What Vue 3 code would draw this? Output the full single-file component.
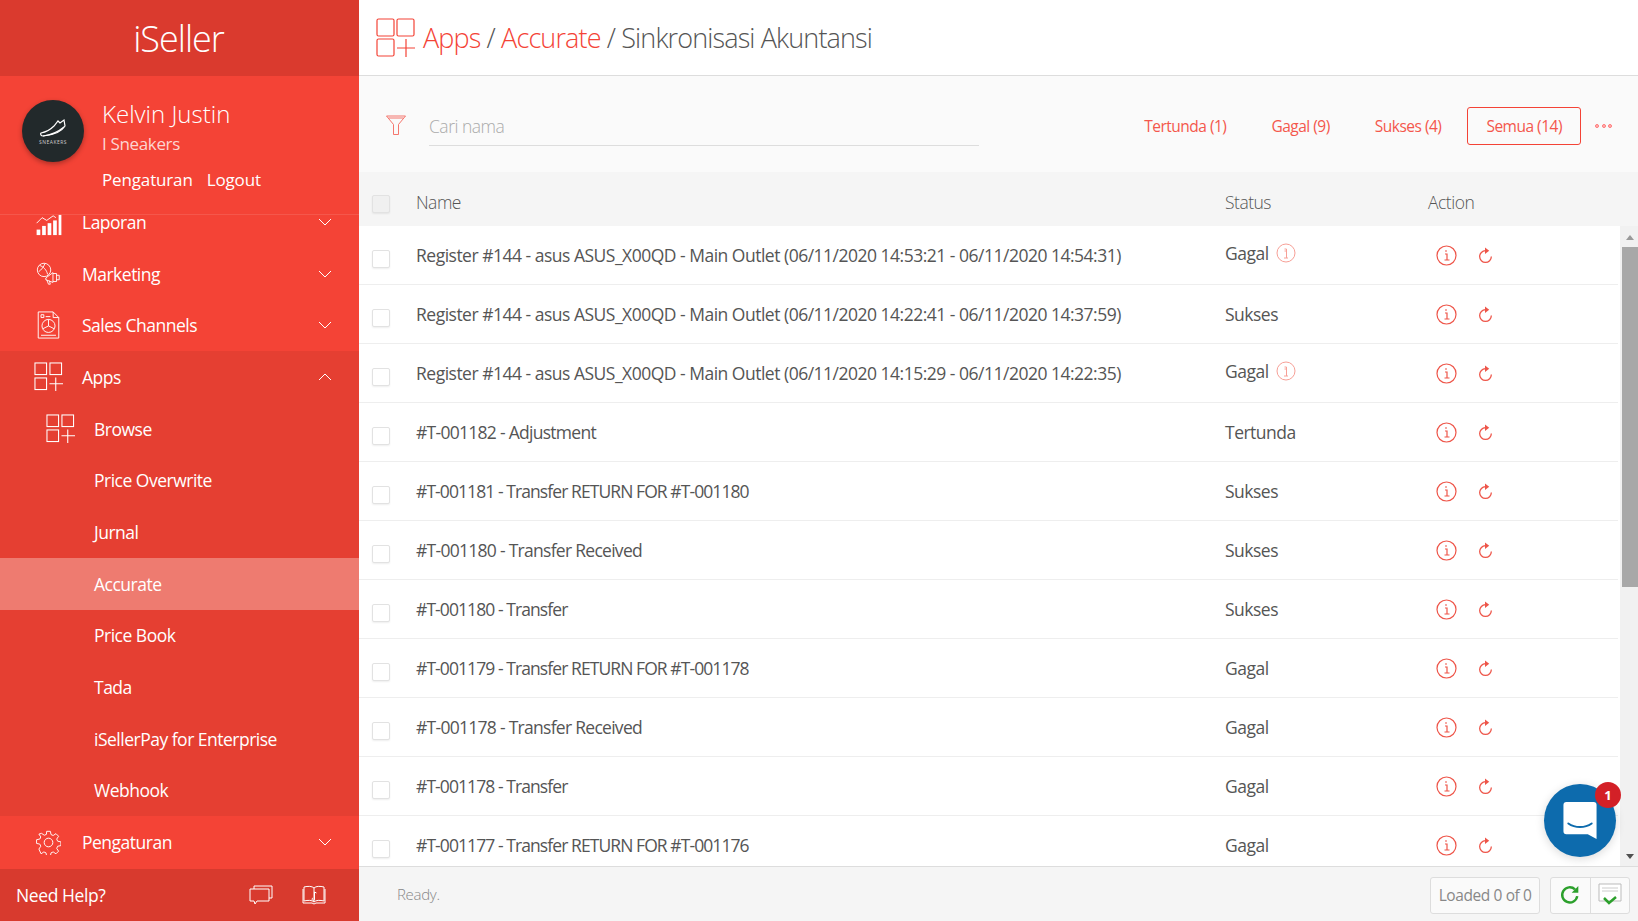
<script setup>
const menuTop = [
  { label: 'Laporan', icon: 'chart' },
  { label: 'Marketing', icon: 'mkt' },
  { label: 'Sales Channels', icon: 'sales' }
]
const subs = ['Price Overwrite', 'Jurnal', 'Accurate', 'Price Book', 'Tada', 'iSellerPay for Enterprise', 'Webhook']
const tabs = ['Tertunda (1)', 'Gagal (9)', 'Sukses (4)']
const rows = [
  { name: 'Register #144 - asus ASUS_X00QD - Main Outlet (06/11/2020 14:53:21 - 06/11/2020 14:54:31)', status: 'Gagal', info: true },
  { name: 'Register #144 - asus ASUS_X00QD - Main Outlet (06/11/2020 14:22:41 - 06/11/2020 14:37:59)', status: 'Sukses' },
  { name: 'Register #144 - asus ASUS_X00QD - Main Outlet (06/11/2020 14:15:29 - 06/11/2020 14:22:35)', status: 'Gagal', info: true },
  { name: '#T-001182 - Adjustment', status: 'Tertunda', fit: 'mid' },
  { name: '#T-001181 - Transfer RETURN FOR #T-001180', status: 'Sukses', fit: 'tight' },
  { name: '#T-001180 - Transfer Received', status: 'Sukses', fit: 'mid' },
  { name: '#T-001180 - Transfer', status: 'Sukses', fit: 'tight' },
  { name: '#T-001179 - Transfer RETURN FOR #T-001178', status: 'Gagal', fit: 'tight' },
  { name: '#T-001178 - Transfer Received', status: 'Gagal', fit: 'mid' },
  { name: '#T-001178 - Transfer', status: 'Gagal', fit: 'tight' },
  { name: '#T-001177 - Transfer RETURN FOR #T-001176', status: 'Gagal', fit: 'tight' }
]
</script>

<template>
  <div class="app">
    <aside class="side">
      <div class="brand">iSeller</div>
      <div class="profile">
        <div class="avatar">
          <svg width="28" height="19" viewBox="0 0 28 19" fill="none" stroke="#fff" stroke-width="1.2">
            <path d="M2 15c5-1 9-3 13-7l4-5 2 2 4-3 1 6c-3 5-10 9-22 10-2 0-3-2-2-3z" />
            <path d="M4 18c8-1 15-4 21-9" />
          </svg>
          <span class="avatar-text">SNEAKERS</span>
        </div>
        <div class="who">
          <div class="who-name">Kelvin Justin</div>
          <div class="who-store">I Sneakers</div>
          <div class="who-links"><span>Pengaturan</span><span>Logout</span></div>
        </div>
      </div>
      <nav class="menu">
        <div class="menu-inner">
          <div v-for="m in menuTop" :key="m.label" class="item">
            <span class="ico">
              <svg v-if="m.icon === 'chart'" class="i-chart" width="28" height="22" viewBox="0 0 29 24" fill="#fff" stroke="none">
                <rect x="1" y="17" width="4" height="6" /><rect x="7" y="13" width="4" height="10" /><rect x="13" y="10" width="4" height="13" /><rect x="19" y="7" width="4" height="16" /><rect x="25" y="1" width="3" height="22" />
                <path d="M1 10l6-6 5 3 7-5 3 2" fill="none" stroke="#fff" stroke-width="1" />
              </svg>
              <svg v-else-if="m.icon === 'mkt'" class="i-small" width="25" height="25" viewBox="0 0 28 26" fill="none" stroke="#fff" stroke-width="1">
                <circle cx="9" cy="9" r="7.5" />
                <path d="M4 4c4 1 8 5 9 10M3 11c3-2 6-6 7-9" />
                <path d="M11 18l8-6v11l-8-3zM19 13h4v9h-4M23 15h3v5h-3M12 20l2 5h2l-1-4" />
              </svg>
              <svg v-else class="i-small" width="25" height="28" viewBox="0 0 26 30" fill="none" stroke="#fff" stroke-width="1">
                <path d="M2 1h16l6 6v22H2z" /><path d="M18 1v6h6M5 4h3v3H5zM10 6h5" />
                <circle cx="13" cy="16" r="7" /><path d="M13 9v7l6 3M13 16l-6 3" />
                <path d="M5 26h16" />
              </svg>
            </span>
            <span class="label">{{ m.label }}</span>
            <svg class="chev" width="14" height="8" viewBox="0 0 14 8" fill="none" stroke="#fff" stroke-width="1"><path d="M1 1l6 6 6-6" /></svg>
          </div>
          <div class="group">
            <div class="item">
              <span class="ico">
                <svg width="29" height="29" viewBox="0 0 30 30" fill="none" stroke="#fff" stroke-width="1.1"><rect x="1" y="1" width="12" height="12" /><rect x="16.500" y="1" width="12" height="12" /><rect x="1" y="16.500" width="12" height="12" /><path d="M16 22.500h14M22.500 16v14" /></svg>
              </span>
              <span class="label">Apps</span>
              <svg class="chev" width="14" height="8" viewBox="0 0 14 8" fill="none" stroke="#fff" stroke-width="1"><path d="M1 7l6-6 6 6" /></svg>
            </div>
            <div class="sub">
              <span class="sub-ico">
                <svg width="29" height="29" viewBox="0 0 30 30" fill="none" stroke="#fff" stroke-width="1.1"><rect x="1" y="1" width="12" height="12" /><rect x="16.500" y="1" width="12" height="12" /><rect x="1" y="16.500" width="12" height="12" /><path d="M16 22.500h14M22.500 16v14" /></svg>
              </span>
              <span class="label">Browse</span>
            </div>
            <div v-for="s in subs" :key="s" class="sub" :class="{ active: s === 'Accurate' }">
              <span class="label">{{ s }}</span>
            </div>
          </div>
          <div class="item">
            <span class="ico">
              <svg class="i-small" width="25" height="25" viewBox="0 0 26 26" fill="none" stroke="#fff" stroke-width="1"><circle cx="13" cy="13" r="4.500" /><path d="M11 1h4l.7 3.500 2.300 1 3-2 2.800 2.800-2 3 1 2.300 3.500.7v4l-3.500.7-1 2.300 2 3-2.800 2.800-3-2-2.300 1-.7 3.500h-4l-.7-3.500-2.300-1-3 2L2.700 20l2-3-1-2.300-3.500-.7v-4l3.500-.7 1-2.300-2-3L5.500 3.200l3 2 2.300-1z" transform="translate(.4 .4) scale(.97)" /></svg>
            </span>
            <span class="label">Pengaturan</span>
            <svg class="chev" width="14" height="8" viewBox="0 0 14 8" fill="none" stroke="#fff" stroke-width="1"><path d="M1 1l6 6 6-6" /></svg>
          </div>
        </div>
      </nav>
      <div class="help">
        <span class="help-text">Need Help?</span>
        <svg class="help-chat" width="24" height="21" viewBox="0 0 24 21" fill="none" stroke="#fff" stroke-width="1"><path d="M5 4V1h18v12h-3" /><path d="M1 4h19v12H8l-2 3-1-3H1z" /></svg>
        <svg class="help-book" width="24" height="20" viewBox="0 0 24 20" fill="none" stroke="#fff" stroke-width="1"><path d="M12 3C10 1 6 1 2 2v14c4-1 8-1 10 1 2-2 6-2 10-1V2c-4-1-8-1-10 1zM12 3v14M1 4v14h9l2 1 2-1h9V4" /><path d="M11 13a1.200 1.200 0 1 0 1.500 1V7l2 1" /></svg>
      </div>
    </aside>

    <main class="main">
      <header class="crumbs">
        <svg width="40" height="40" viewBox="0 0 40 40" fill="none" stroke="#f44336" stroke-width="1.200"><rect x="1" y="1" width="17" height="17" rx="1.500" /><rect x="21" y="1" width="17" height="17" rx="1.500" /><rect x="1" y="21" width="17" height="17" rx="1.500" /><path d="M21 30h18M30 21v18" /></svg>
        <span class="crumb-text"><span class="red">Apps</span> / <span class="red">Accurate</span> / Sinkronisasi Akuntansi</span>
      </header>

      <section class="filter">
        <svg class="funnel" width="20" height="20" viewBox="0 0 20 20" fill="none" stroke="#f4685d" stroke-width=".9"><path d="M.5 1h19L12.500 9.500V19.500h-5V9.500zM2.500 3h15" /></svg>
        <div class="search">Cari nama</div>
        <div class="tabs">
          <span v-for="t in tabs" :key="t" class="tab">{{ t }}</span>
          <span class="tab on">Semua (14)</span>
          <span class="dots"><i></i><i></i><i></i></span>
        </div>
      </section>

      <div class="thead">
        <span class="check"></span>
        <span class="c-name">Name</span>
        <span class="c-status">Status</span>
        <span class="c-action">Action</span>
      </div>

      <div class="body">
        <div class="rows">
          <div v-for="(r, i) in rows" :key="i" class="row">
            <span class="check low"></span>
            <span class="c-name" :class="r.fit">{{ r.name }}</span>
            <span class="c-status" :class="{ raised: r.info }">{{ r.status }}
              <svg v-if="r.info" class="sinfo" width="20" height="20" viewBox="0 0 20 20" fill="none" stroke="#f7a097"><circle cx="10" cy="10" r="9" /><path d="M8.500 6h2v9M8 15h4M8.500 8h2" /></svg>
            </span>
            <span class="c-action">
              <svg width="21" height="21" viewBox="0 0 21 21" fill="none" stroke="#ee5549" stroke-width="1.200"><circle cx="10.500" cy="10.500" r="9.500" /><path d="M9 6h2M9 9h2v6M8.500 15h5" /></svg>
              <svg class="redo" width="15" height="17" viewBox="0 0 14 16" fill="none" stroke="#ee5549" stroke-width="1.200"><path d="M7 3.500A5.500 5.500 0 1 0 12.500 9" /><path d="M6.500.5l4 3-4 3z" fill="#ee5549" stroke="none" /></svg>
            </span>
          </div>
        </div>
        <div class="scrollbar">
          <span class="arrow up"></span>
          <span class="thumb"></span>
          <span class="spacer"></span>
          <span class="arrow down"></span>
        </div>
      </div>

      <footer class="foot">
        <span class="ready">Ready.</span>
        <span class="loaded">Loaded 0 of 0</span>
        <div class="btns">
          <span class="btn">
            <svg width="20" height="20" viewBox="0 0 18 18" fill="none" stroke="#2ca02c" stroke-width="2.200"><path d="M15.500 10a6.800 6.800 0 1 1-2-6" /><path d="M16.500 1v6h-6z" fill="#2ca02c" stroke="none" /></svg>
          </span>
          <span class="btn">
            <svg width="26" height="24" viewBox="0 0 26 24" fill="none"><path d="M2 1h22v17H2z" stroke="#bbb" fill="#fff" /><path d="M5 5h16M5 8h16" stroke="#ccc" /><path d="M7 15l5 5 7-6" stroke="#2ca02c" stroke-width="2.500" /></svg>
          </span>
        </div>
      </footer>
    </main>

    <div class="chat">
      <svg width="34" height="37" viewBox="0 0 34 38" fill="#fff"><path d="M3 0h28a3 3 0 0 1 3 3v35l-9-5H3a3 3 0 0 1-3-3V3a3 3 0 0 1 3-3z" /><path d="M5 22c7 5 17 5 24 0" fill="none" stroke="#0d6bad" stroke-width="2" stroke-linecap="round" /></svg>
      <span class="badge">1</span>
    </div>
  </div>
</template>

<style>
html, body { margin: 0; overflow: hidden; }
</style>

<style scoped>
.app {
  width: 1638px;
  height: 921px;
  display: flex;
  overflow: hidden;
  position: relative;
  font-family: "Open Sans", "Noto Sans", sans-serif;
  color: #555;
}
.side {
  width: 359px;
  flex: none;
  display: flex;
  flex-direction: column;
  background: #f44336;
  color: #fff;
}
.brand {
  height: 76px;
  background: #da3a2e;
  display: flex;
  align-items: center;
  justify-content: center;
  font-size: 36px;
  font-weight: 300;
  letter-spacing: -1px;
  padding-right: 2px;
  box-sizing: border-box;
}
.profile {
  height: 139px;
  box-sizing: border-box;
  flex: none;
  padding: 23px 0 0 22px;
  display: flex;
  gap: 18px;
  border-bottom: 1px solid #f5574b;
}
.avatar {
  width: 62px;
  height: 62px;
  margin-top: 1px;
  border-radius: 50%;
  background: #22292b;
  box-shadow: 0 2px 5px rgba(0, 0, 0, .3);
  display: flex;
  flex-direction: column;
  align-items: center;
  justify-content: center;
  gap: 2px;
}
.avatar-text { font-size: 5px; letter-spacing: .5px; color: #ccc; }
.who-name { font-size: 24px; font-weight: 300; line-height: 28px; letter-spacing: 0; margin-top: 1px; }
.who-store { font-size: 17px; line-height: 26px; margin-top: 3px; color: #fdd5d1; letter-spacing: -.35px; }
.who-links { display: flex; gap: 14px; font-size: 17px; line-height: 26px; margin-top: 10px; letter-spacing: -.15px; }
.menu { flex: 1; min-height: 0; }
.menu-inner { margin-top: -19px; }
.item, .sub {
  height: 51.7px;
  display: flex;
  align-items: center;
  font-size: 17.500px;
  letter-spacing: -.5px;
  box-sizing: border-box;
}
.label { line-height: 16px; }
.item { padding-left: 34px; }
.sub { padding-left: 94px; position: relative; }
.sub.active { background: #ee7b70; }
.ico { width: 48px; flex: none; display: flex; align-items: center; }
.i-chart { margin: 6px 0 0 1px; }
.i-small { margin-left: 2px; }
.sub-ico { position: absolute; left: 46px; top: 11px; display: flex; }
.chev { margin-left: auto; margin-right: 27px; }
.group { background: #e53f32; }
.help {
  height: 52px;
  flex: none;
  background: #d83a2e;
  display: flex;
  align-items: center;
  padding: 0 0 0 16px;
  box-sizing: border-box;
  font-size: 17.500px;
  letter-spacing: -.4px;
}
.help-chat { margin-left: auto; }
.help-book { margin-left: 29px; margin-right: 33px; }

.main { flex: 1; min-width: 0; display: flex; flex-direction: column; background: #fff; }
.crumbs {
  height: 76px;
  box-sizing: border-box;
  flex: none;
  border-bottom: 1px solid #ddd;
  display: flex;
  align-items: center;
  gap: 7px;
  padding-left: 17px;
  font-size: 27px;
  font-weight: 300;
  letter-spacing: -.87px;
  color: #555;
}
.red { color: #f44336; }
.filter {
  height: 96px;
  box-sizing: border-box;
  flex: none;
  background: #fafafa;
  display: flex;
  align-items: center;
  padding: 4px 26px 0 27px;
}
.funnel { margin-right: 23px; margin-top: -2px; }
.search {
  width: 550px;
  height: 39px;
  line-height: 39px;
  box-sizing: border-box;
  border-bottom: 1px solid #ddd;
  color: #aaa;
  font-size: 17.500px;
  font-weight: 300;
  letter-spacing: -.5px;
}
.tabs { margin-left: auto; display: flex; align-items: center; font-size: 15.500px; letter-spacing: -.5px; color: #f4574c; }
.tab { height: 38px; line-height: 37px; box-sizing: border-box; padding: 0 18px; border: 1px solid transparent; border-radius: 3px; margin-left: 7px; white-space: nowrap; }
.tab.on { border-color: #f44336; }
.dots { display: flex; gap: 2.500px; margin-left: 14px; }
.dots i { width: 4px; height: 4px; border-radius: 50%; background: #fbb; border: 1px solid #f77; box-sizing: border-box; }
.thead {
  height: 54px;
  box-sizing: border-box;
  padding-top: 5px;
  flex: none;
  background: #f5f5f5;
  display: flex;
  align-items: center;
  font-size: 17.500px;
  letter-spacing: -.5px;
  font-weight: 300;
  color: #555;
}
.check {
  width: 18px;
  height: 18px;
  flex: none;
  margin-left: 13px;
  box-sizing: border-box;
  border: 1.500px solid #e2e2e2;
  border-radius: 2px;
  background: #fff;
  box-shadow: 0 1px 2px rgba(0, 0, 0, .07);
}
.thead .check { background: #f0f0f0; margin-top: 4px; }
.check.low { margin-top: 8px; }
.c-name { width: 809px; flex: none; margin-left: 26px; white-space: nowrap; }
.c-name.mid { letter-spacing: -.72px; }
.c-name.tight { letter-spacing: -.92px; }
.c-status { width: 203px; flex: none; display: flex; align-items: center; gap: 7px; }
.c-status.raised { margin-top: -4px; }
.c-action { display: flex; align-items: center; }
.body { flex: 1; min-height: 0; display: flex; overflow: hidden; }
.rows { flex: 1; min-width: 0; padding-right: 2px; }
.row {
  height: 59px;
  box-sizing: border-box;
  display: flex;
  align-items: center;
  border-bottom: 1px solid #eee;
  font-size: 17.500px;
  letter-spacing: -.5px;
  color: #555;
}
.row .c-action { margin-left: 8px; gap: 21px; margin-top: 1px; }
.sinfo { margin-top: 0; }
.scrollbar { width: 18px; flex: none; background: #f1f1f1; display: flex; flex-direction: column; align-items: flex-end; }
.arrow { width: 0; height: 0; border-left: 4px solid transparent; border-right: 4px solid transparent; flex: none; margin-right: 4px; }
.arrow.up { border-bottom: 5px solid #999; margin-top: 9px; margin-bottom: 7px; }
.arrow.down { border-top: 5px solid #505050; margin-bottom: 7px; }
.thumb { width: 16px; height: 340px; background: #a8a8a8; flex: none; }
.spacer { flex: 1; }
.foot {
  height: 55px;
  flex: none;
  box-sizing: border-box;
  border-top: 1px solid #ddd;
  background: #f5f5f5;
  display: flex;
  align-items: center;
  padding: 2px 8px 0 38px;
}
.ready { font-size: 15px; color: #888; font-weight: 300; letter-spacing: -.3px; margin-top: -2px; }
.loaded {
  margin-left: auto;
  height: 37px;
  line-height: 35px;
  box-sizing: border-box;
  padding: 0 7.500px;
  border: 1px solid #ddd;
  border-radius: 3px;
  background: #fafafa;
  color: #888;
  font-size: 15.500px;
  letter-spacing: -.4px;
  white-space: nowrap;
}
.btns { margin-left: 10px; display: flex; height: 37px; border: 1px solid #ddd; border-radius: 3px; background: #fafafa; box-sizing: border-box; }
.btn { width: 38.500px; display: flex; align-items: center; justify-content: center; }
.btn + .btn { border-left: 1px solid #ddd; }
.chat {
  position: absolute;
  left: 1544px;
  top: 784px;
  width: 72px;
  height: 73px;
  border-radius: 50%;
  background: #0d6bad;
  display: flex;
  align-items: center;
  justify-content: center;
  box-shadow: 0 2px 10px rgba(0, 0, 0, .15);
}
.badge {
  position: absolute;
  right: -5px;
  top: -2px;
  width: 26px;
  height: 26px;
  border-radius: 50%;
  background: #d32027;
  color: #fff;
  font-size: 13px;
  font-weight: 700;
  display: flex;
  align-items: center;
  justify-content: center;
}
</style>
